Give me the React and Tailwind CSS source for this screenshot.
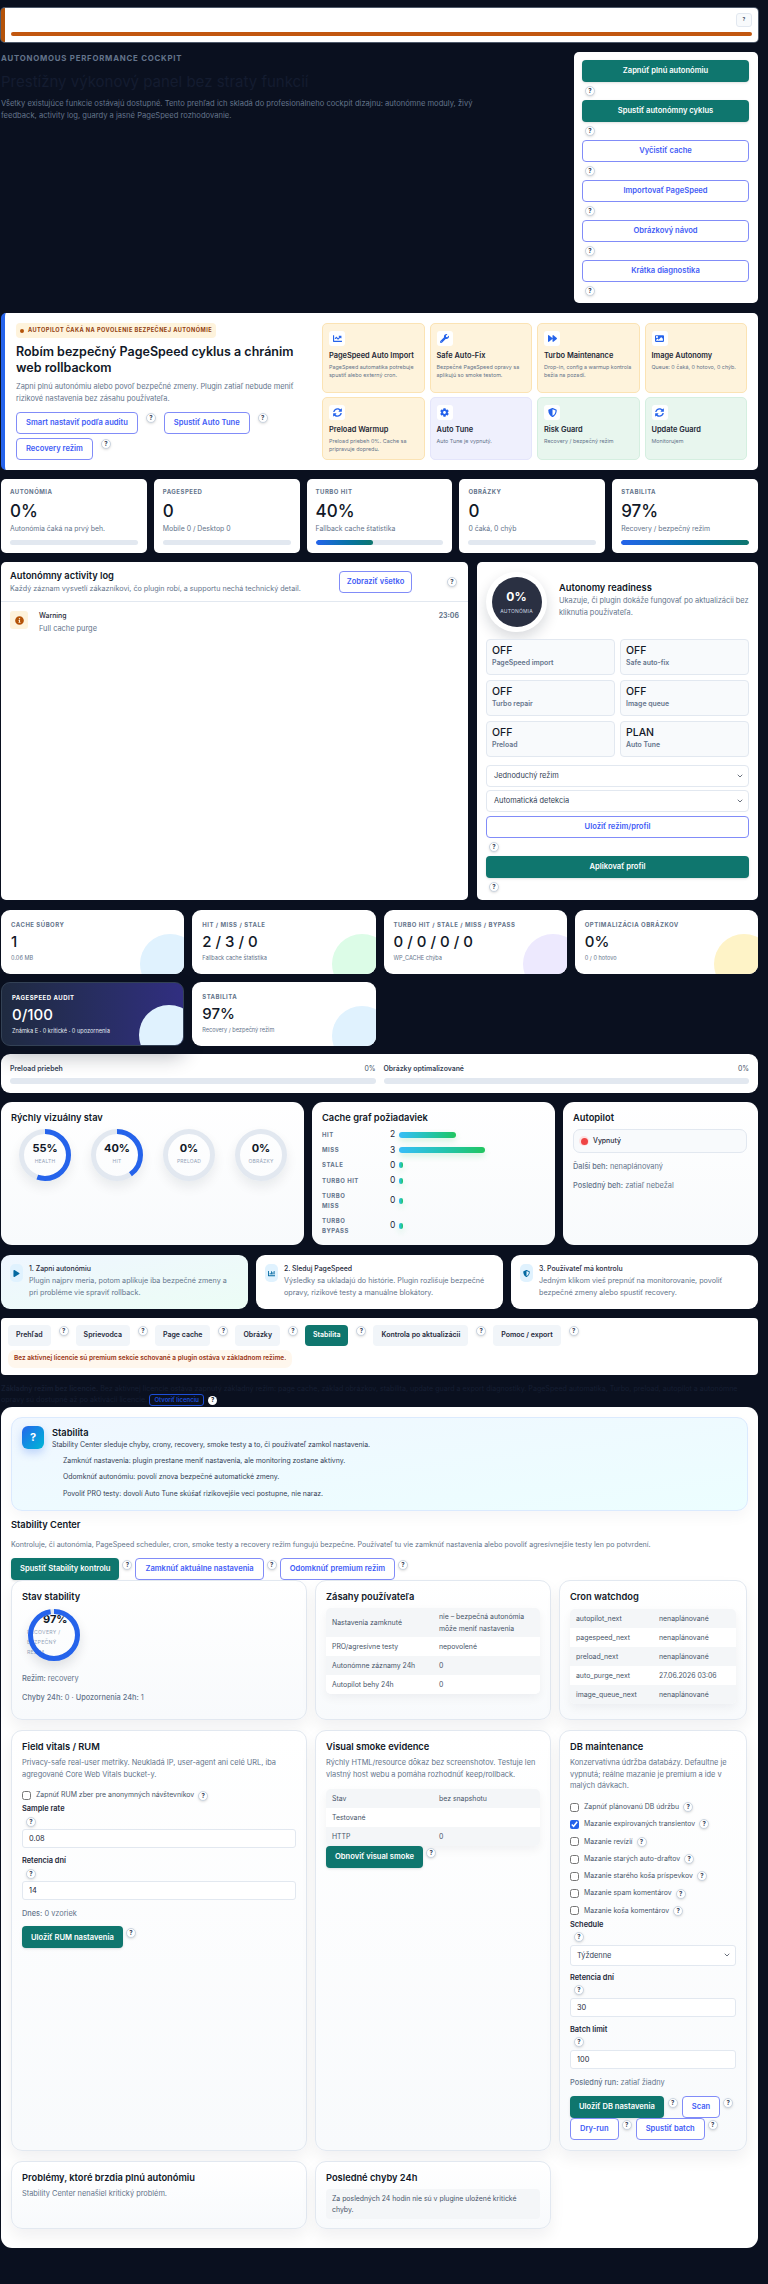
import {
    FaWrench, FaForward, FaCog, FaSyncAlt, FaShieldAlt, FaPlay, FaInfoCircle, FaChartBar, FaChartLine, FaImage,
} from 'react-icons/fa';
import { LuChevronDown } from 'react-icons/lu';

const Help = ({ className = '' }) => (
    <span className={`inline-flex h-[10px] w-[10px] shrink-0 items-center justify-center rounded-full border border-[#cbd5e1] bg-white text-[6px] font-bold leading-none text-[#334155] shadow-sm ${className}`}>
        ?
    </span>
);

const Btn = ({ children, primary, className = '' }) => (
    <button className={`flex h-[22px] shrink-0 items-center justify-center whitespace-nowrap rounded-[4px] px-[9px] text-[7.6px] font-semibold ${primary ? 'bg-[#0f766e] text-white shadow-sm' : 'border border-[#818cf8] bg-white text-[#3f5cf6]'} ${className}`}>
        {children}
    </button>
);

const sideActions = [
    ['Zapnúť plnú autonómiu', true],
    ['Spustiť autonómny cyklus', true],
    ['Vyčistiť cache', false],
    ['Importovať PageSpeed', false],
    ['Obrázkový návod', false],
    ['Krátka diagnostika', false],
];

const tiles = [
    { icon: FaChartLine, title: 'PageSpeed Auto Import', text: 'PageSpeed automatika potrebuje spustiť alebo externý cron.', color: 'amber' },
    { icon: FaWrench, title: 'Safe Auto-Fix', text: 'Bezpečné PageSpeed opravy sa aplikujú so smoke testom.', color: 'amber' },
    { icon: FaForward, title: 'Turbo Maintenance', text: 'Drop-in, config a warmup kontrola bežia na pozadí.', color: 'amber' },
    { icon: FaImage, title: 'Image Autonomy', text: 'Queue: 0 čaká, 0 hotovo, 0 chýb.', color: 'amber' },
    { icon: FaSyncAlt, title: 'Preload Warmup', text: 'Preload priebeh 0%. Cache sa pripravuje dopredu.', color: 'amber' },
    { icon: FaCog, title: 'Auto Tune', text: 'Auto Tune je vypnutý.', color: 'violet' },
    { icon: FaShieldAlt, title: 'Risk Guard', text: 'Recovery / bezpečný režim', color: 'green' },
    { icon: FaSyncAlt, title: 'Update Guard', text: 'Monitorujem', color: 'green' },
];

const tileColors = {
    amber: 'bg-[#fef3dc] border-[#fbe3b4]',
    violet: 'bg-[#eff0fd] border-[#e4e5fb]',
    green: 'bg-[#e8f6ee] border-[#d5efe0]',
};

const kpis = [
    ['AUTONÓMIA', '0%', 'Autonómia čaká na prvý beh.', 0],
    ['PAGESPEED', '0', 'Mobile 0 / Desktop 0', 0],
    ['TURBO HIT', '40%', 'Fallback cache štatistika', 45],
    ['OBRÁZKY', '0', '0 čaká, 0 chýb', 0],
    ['STABILITA', '97%', 'Recovery / bezpečný režim', 100],
];

const readiness = [
    ['OFF', 'PageSpeed import'],
    ['OFF', 'Safe auto-fix'],
    ['OFF', 'Turbo repair'],
    ['OFF', 'Image queue'],
    ['OFF', 'Preload'],
    ['PLAN', 'Auto Tune'],
];

const stats = [
    { label: 'CACHE SÚBORY', value: '1', sub: '0.06 MB', blob: 'bg-[#e0f2fe]' },
    { label: 'HIT / MISS / STALE', value: '2 / 3 / 0', sub: 'Fallback cache štatistika', blob: 'bg-[#dcfce7]' },
    { label: 'TURBO HIT / STALE / MISS / BYPASS', value: '0 / 0 / 0 / 0', sub: 'WP_CACHE chýba', blob: 'bg-[#ede9fe]' },
    { label: 'OPTIMALIZÁCIA OBRÁZKOV', value: '0%', sub: '0 / 0 hotovo', blob: 'bg-[#fef3c7]' },
    { label: 'PAGESPEED AUDIT', value: '0/100', sub: 'Známka E · 0 kritické · 0 upozornenia', blob: 'bg-[#e0f2fe]', dark: true },
    { label: 'STABILITA', value: '97%', sub: 'Recovery / bezpečný režim', blob: 'bg-[#e0f2fe]' },
];

const rings = [
    ['55%', 'HEALTH', 55],
    ['40%', 'HIT', 40],
    ['0%', 'PRELOAD', 0],
    ['0%', 'OBRÁZKY', 0],
];

const cacheRows = [
    { label: 'HIT', value: 2, bar: 'w-[57px]' },
    { label: 'MISS', value: 3, bar: 'w-[86px]' },
    { label: 'STALE', value: 0, bar: 'w-[4px]' },
    { label: 'TURBO HIT', value: 0, bar: 'w-[4px]' },
    { label: 'TURBO MISS', value: 0, bar: 'w-[4px]', tall: true },
    { label: 'TURBO BYPASS', value: 0, bar: 'w-[4px]', tall: true },
];

const steps = [
    { icon: FaPlay, title: '1. Zapni autonómiu', text: 'Plugin najprv meria, potom aplikuje iba bezpečné zmeny a pri probléme vie spraviť rollback.', tint: true },
    { icon: FaChartBar, title: '2. Sleduj PageSpeed', text: 'Výsledky sa ukladajú do histórie. Plugin rozlišuje bezpečné opravy, rizikové testy a manuálne blokátory.' },
    { icon: FaShieldAlt, title: '3. Používateľ má kontrolu', text: 'Jedným klikom vieš prepnúť na monitorovanie, povoliť bezpečné zmeny alebo spustiť recovery.' },
];

const tabs = ['Prehľad', 'Sprievodca', 'Page cache', 'Obrázky', 'Stabilita', 'Kontrola po aktualizácii', 'Pomoc / export'];

const dbChecks = [
    ['Zapnúť plánovanú DB údržbu', false],
    ['Mazanie expirovaných transientov', true],
    ['Mazanie revízií', false],
    ['Mazanie starých auto-draftov', false],
    ['Mazanie starého koša príspevkov', false],
    ['Mazanie spam komentárov', false],
    ['Mazanie koša komentárov', false],
];

const Ring = ({ pct }) => {
    const r = 23.5;
    const len = 2 * Math.PI * r;
    return (
        <svg width="52" height="52" viewBox="0 0 52 52" className="block">
            <circle cx="26" cy="26" r={r} fill="none" stroke="#e2e8f0" strokeWidth="5" />
            <circle
                cx="26"
                cy="26"
                r={r}
                fill="none"
                stroke="#2563eb"
                strokeWidth="5"
                strokeDasharray={`${(len * pct) / 100} ${len}`}
                transform="rotate(-90 26 26)"
            />
        </svg>
    );
};

const Panel = ({ title, children, className = '' }) => (
    <div className={`rounded-[11px] border border-[#e2e8f0] bg-gradient-to-b from-white to-[#f8fafc] px-[10px] pt-[9px] shadow-[0_8px_16px_rgba(15,23,42,0.06)] ${className}`}>
        <h3 className="text-[9.3px] font-semibold leading-[13px] text-[#111827]">{title}</h3>
        {children}
    </div>
);

const DataTable = ({ rows, firstCol, className = '' }) => (
    <div className={`overflow-hidden rounded-[5px] bg-white text-[6.9px] leading-[11.5px] text-[#475569] shadow-[0_4px_10px_rgba(15,23,42,0.05)] ${className}`}>
        {rows.map(([a, b], i) => (
            <div key={a} className={`flex min-h-[19px] items-center px-[6px] py-[3px] ${i % 2 === 0 ? 'bg-[#f4f6f8]' : 'bg-white'}`}>
                <span className={`shrink-0 ${firstCol}`}>{a}</span>
                <span>{b}</span>
            </div>
        ))}
    </div>
);

const Field = ({ label, value, children }) => (
    <div>
        <div className="text-[7.4px] font-semibold leading-[10px] text-[#1e293b]">{label}</div>
        <div className="flex h-[15px] items-center pl-[4px]"><Help /></div>
        {children || (
            <input
                readOnly
                value={value}
                className="block h-[19px] w-full rounded-[3px] border border-[#e2e8f0] bg-white px-[6px] text-[7.4px] text-[#1e293b]"
            />
        )}
    </div>
);

const Check = ({ label, checked = false }) => (
    <label className="flex h-[17.3px] items-center">
        <input type="checkbox" readOnly checked={checked} className="mr-[5px] h-[9px] w-[9px] accent-[#2563eb]" />
        <span className="text-[6.9px] text-[#475569]">{label}</span>
        <Help className="ml-[4px]" />
    </label>
);

const App = () => {
    return (
        <div className="min-h-[2284px] bg-[#0a101f] pb-[36px] pl-px pr-[10px] pt-[8px] font-['Inter',sans-serif] text-[#111827]">
            {/* Top notice */}
            <div className="h-[34px] rounded-[4px] border-l-[4px] border-[#b45309] bg-white pr-[6px] pt-[5px] shadow-[0_0_0_1px_rgba(148,163,184,0.5)]">
                <div className="flex justify-end">
                    <button className="flex h-[14px] w-[16px] items-center justify-center rounded-[3px] border border-[#e2e8f0] bg-[#f8fafc] text-[5px] font-bold text-[#334155]">?</button>
                </div>
                <div className="ml-[6px] mt-[5px] h-[4px] rounded-full bg-[#c2570f]" />
            </div>

            {/* Header */}
            <div className="mt-[10px] flex justify-between">
                <div className="w-[490px]">
                    <div className="mt-[1px] text-[7.8px] font-bold leading-[10px] tracking-[0.1em] text-[#64748b]">AUTONOMOUS PERFORMANCE COCKPIT</div>
                    <h1 className="mt-[9px] text-[15px] font-normal leading-[20px] text-[#141c30]">Prestížny výkonový panel bez straty funkcií</h1>
                    <p className="mt-[6px] text-[7.6px] leading-[12px] text-[#64748b]">
                        Všetky existujúce funkcie ostávajú dostupné. Tento prehľad ich skladá do profesionálneho cockpit dizajnu: autonómne moduly, živý feedback, activity log, guardy a jasné PageSpeed rozhodovanie.
                    </p>
                </div>
                <div className="h-[251px] w-[184px] rounded-[5px] bg-white pl-[8px] pr-[9px] pt-[8px]">
                    {sideActions.map(([label, primary]) => (
                        <div key={label}>
                            <Btn primary={primary} className="w-full">{label}</Btn>
                            <div className="flex h-[18px] items-center pl-[3px]">
                                <Help />
                            </div>
                        </div>
                    ))}
                </div>
            </div>

            {/* Hero */}
            <div className="mt-[10px] flex h-[157px] justify-between rounded-[5px] border-l-[4px] border-[#2563eb] bg-white pb-[10px] pl-[11px] pr-[11px] pt-[10px]">
                <div className="w-[298px]">
                    <div className="flex h-[15px] w-fit items-center gap-[4px] rounded-[4px] bg-[#fef3dc] px-[4px] text-[5.6px] font-bold tracking-[0.08em] text-[#92400e]">
                        <span className="h-[4px] w-[4px] rounded-full bg-[#b45309]" />
                        AUTOPILOT ČAKÁ NA POVOLENIE BEZPEČNEJ AUTONÓMIE
                    </div>
                    <h2 className="mt-[6px] text-[12.5px] font-semibold leading-[16px] text-[#111827]">Robím bezpečný PageSpeed cyklus a chránim web rollbackom</h2>
                    <p className="mt-[5px] text-[7.4px] leading-[12px] text-[#64748b]">
                        Zapni plnú autonómiu alebo povoľ bezpečné zmeny. Plugin zatiaľ nebude meniť rizikové nastavenia bez zásahu používateľa.
                    </p>
                    <div className="mt-[7px] flex flex-wrap items-start gap-y-[4px]">
                        <Btn>Smart nastaviť podľa auditu</Btn>
                        <Help className="ml-[8px] mr-[8px] mt-[1px]" />
                        <Btn>Spustiť Auto Tune</Btn>
                        <Help className="ml-[8px] mr-[40px] mt-[1px]" />
                        <Btn>Recovery režim</Btn>
                        <Help className="ml-[8px] mt-[1px]" />
                    </div>
                </div>
                <div className="grid w-[425px] grid-cols-4 grid-rows-[70px_63px] gap-x-[5px] gap-y-[4px]">
                    {tiles.map(({ icon: Icon, title, text, color }) => (
                        <div key={title} className={`rounded-[5px] border px-[6px] pt-[7px] ${tileColors[color]}`}>
                            <span className="flex h-[15px] w-[16px] items-center justify-center rounded-[3px] bg-white">
                                <Icon className="h-[9px] w-[9px] text-[#2563eb]" />
                            </span>
                            <div className="mt-[5px] text-[7.4px] font-semibold leading-[10px] text-[#1f2937]">{title}</div>
                            <div className="mt-[2px] text-[5.4px] leading-[8px] text-[#64748b]">{text}</div>
                        </div>
                    ))}
                </div>
            </div>

            {/* KPI row */}
            <div className="mt-[9px] grid grid-cols-5 gap-[7px]">
                {kpis.map(([label, value, sub, pct]) => (
                    <div key={label} className="h-[74px] rounded-[5px] bg-white px-[9px] pt-[9px]">
                        <div className="text-[6px] font-bold leading-[8px] tracking-[0.08em] text-[#64748b]">{label}</div>
                        <div className="mt-[5px] text-[17px] font-medium leading-[20px] text-[#111827]">{value}</div>
                        <div className="mt-[3px] text-[6.9px] leading-[10px] text-[#64748b]">{sub}</div>
                        <div className="mt-[6px] h-[5px] overflow-hidden rounded-full bg-[#e2e8f0]">
                            <div className="h-full rounded-full bg-gradient-to-r from-[#2563eb] to-[#0f766e]" style={{ width: `${pct}%` }} />
                        </div>
                    </div>
                ))}
            </div>

            {/* Activity + readiness */}
            <div className="mt-[9px] grid h-[338px] grid-cols-[467px_281px] gap-[9px]">
                <div className="rounded-[5px] bg-white">
                    <div className="flex h-[40px] items-center justify-between border-b border-[#e2e8f0] pl-[9px] pr-[11px]">
                        <div>
                            <h3 className="text-[9.3px] font-semibold leading-[13px] text-[#111827]">Autonómny activity log</h3>
                            <p className="text-[7.2px] leading-[13px] text-[#64748b]">Každý záznam vysvetlí zákazníkovi, čo plugin robí, a supportu nechá technický detail.</p>
                        </div>
                        <div className="flex items-center">
                            <Btn className="w-[73px] px-0">Zobraziť všetko</Btn>
                            <Help className="ml-[35px]" />
                        </div>
                    </div>
                    <div className="flex pl-[9px] pr-[9px] pt-[9px]">
                        <span className="flex h-[18px] w-[18px] items-center justify-center rounded-[3px] bg-[#fef3dc]">
                            <FaInfoCircle className="h-[9px] w-[9px] text-[#b45309]" />
                        </span>
                        <div className="ml-[11px] flex-1">
                            <div className="text-[6.9px] font-medium leading-[10px] text-[#1f2937]">Warning</div>
                            <div className="mt-[2px] text-[7.4px] leading-[12px] text-[#64748b]">Full cache purge</div>
                        </div>
                        <div className="text-[6.9px] font-bold leading-[10px] text-[#64748b]">23:06</div>
                    </div>
                </div>

                <div className="rounded-[5px] bg-white pl-[9px] pr-[9px] pt-[10px]">
                    <div className="flex items-center">
                        <div className="flex h-[60px] w-[61px] shrink-0 items-center justify-center rounded-full bg-white shadow-[0_6px_14px_rgba(15,23,42,0.16)]">
                            <div className="flex h-[50px] w-[50px] flex-col items-center justify-center rounded-full bg-[#2a3042] text-white">
                                <div className="text-[12px] font-bold leading-[16px]">0%</div>
                                <div className="mt-[3px] text-[5px] leading-[7px] tracking-[0.04em] text-[#cbd5e1]">AUTONÓMIA</div>
                            </div>
                        </div>
                        <div className="ml-[12px] mt-[-5px]">
                            <h3 className="text-[9.3px] font-semibold leading-[13px] text-[#111827]">Autonomy readiness</h3>
                            <p className="mt-[1px] text-[7.4px] leading-[12px] text-[#64748b]">Ukazuje, či plugin dokáže fungovať po aktualizácii bez kliknutia používateľa.</p>
                        </div>
                    </div>
                    <div className="mt-[7px] grid grid-cols-2 gap-x-[5px] gap-y-[5px]">
                        {readiness.map(([value, label]) => (
                            <div key={label} className="h-[36px] rounded-[4px] border border-[#e2e8f0] bg-[#f8fafc] px-[5px] pt-[4px]">
                                <div className="text-[10.5px] font-medium leading-[14px] text-[#111827]">{value}</div>
                                <div className="text-[6.9px] font-semibold leading-[10px] text-[#64748b]">{label}</div>
                            </div>
                        ))}
                    </div>
                    <div className="mt-[8px] flex h-[22px] items-center justify-between rounded-[4px] border border-[#e2e8f0] bg-white pl-[7px] pr-[4px] text-[7.4px] text-[#334155]">
                        Jednoduchý režim <LuChevronDown className="h-[8px] w-[8px] text-[#1e293b]" />
                    </div>
                    <div className="mt-[3px] flex h-[22px] items-center justify-between rounded-[4px] border border-[#e2e8f0] bg-white pl-[7px] pr-[4px] text-[7.4px] text-[#334155]">
                        Automatická detekcia <LuChevronDown className="h-[8px] w-[8px] text-[#1e293b]" />
                    </div>
                    <Btn className="mt-[4px] w-full">Uložiť režim/profil</Btn>
                    <div className="flex h-[18px] items-center pl-[3px]"><Help /></div>
                    <Btn primary className="w-full">Aplikovať profil</Btn>
                    <div className="flex h-[18px] items-center pl-[3px]"><Help /></div>
                </div>
            </div>

            {/* Stat cards */}
            <div className="mt-[10px] grid grid-cols-4 gap-x-[8px] gap-y-[8px]">
                {stats.map(({ label, value, sub, blob, dark }) => (
                    <div
                        key={label}
                        className={`relative h-[64px] overflow-hidden rounded-[9px] px-[10px] pt-[11px] ${dark ? 'border border-[#334155] bg-gradient-to-r from-[#1f2a40] to-[#312e81] text-white shadow-[0_10px_20px_rgba(15,23,42,0.3)]' : 'bg-white text-[#111827]'}`}
                    >
                        <div className={`absolute bottom-[-20px] right-[-16px] h-[60px] w-[60px] rounded-full ${blob}`} />
                        <div className={`relative text-[6px] font-bold leading-[8px] tracking-[0.08em] ${dark ? 'text-white' : 'text-[#64748b]'}`}>{label}</div>
                        <div className="relative mt-[4px] text-[15px] font-medium leading-[18px]">{value}</div>
                        <div className={`relative mt-[3px] text-[5.6px] leading-[8px] ${dark ? 'text-[#e2e8f0]' : 'text-[#64748b]'}`}>{sub}</div>
                    </div>
                ))}
            </div>

            {/* Progress */}
            <div className="mt-[8px] grid h-[39px] grid-cols-2 gap-x-[8px] rounded-[9px] bg-white px-[9px] pt-[10px]">
                {[['Preload priebeh', '0%'], ['Obrázky optimalizované', '0%']].map(([label, value]) => (
                    <div key={label}>
                        <div className="flex justify-between text-[6.9px] leading-[10px]">
                            <span className="font-semibold text-[#334155]">{label}</span>
                            <span className="text-[#475569]">{value}</span>
                        </div>
                        <div className="mt-[4px] h-[6px] rounded-full bg-[#e2e8f0]" />
                    </div>
                ))}
            </div>

            {/* Visual row */}
            <div className="mt-[9px] grid h-[143px] grid-cols-[303px_243px_195px] gap-[8px]">
                <div className="rounded-[11px] bg-gradient-to-b from-white to-[#f8fafc] px-[10px] pt-[9px]">
                    <h3 className="text-[9.3px] font-semibold leading-[13px]">Rýchly vizuálny stav</h3>
                    <div className="ml-[8px] mt-[5px] flex gap-[20px]">
                        {rings.map(([value, label, pct]) => (
                            <div key={label} className="relative h-[52px] w-[52px] rounded-full shadow-[0_6px_12px_rgba(15,23,42,0.08)]">
                                <Ring pct={pct} />
                                <div className="absolute inset-0 flex flex-col items-center justify-center">
                                    <div className="mt-[-5px] text-[11px] font-bold leading-[14px] text-[#111827]">{value}</div>
                                    <div className="mt-[3px] text-[5px] leading-[7px] tracking-[0.04em] text-[#94a3b8]">{label}</div>
                                </div>
                            </div>
                        ))}
                    </div>
                </div>

                <div className="rounded-[11px] bg-gradient-to-b from-white to-[#f8fafc] px-[10px] pt-[9px]">
                    <h3 className="text-[9.3px] font-semibold leading-[13px]">Cache graf požiadaviek</h3>
                    <div className="mt-[3px]">
                        {cacheRows.map(({ label, value, bar, tall }) => (
                            <div key={label} className={`flex items-center ${tall ? 'h-[25px]' : 'h-[15.3px]'}`}>
                                <span className="w-[68px]">
                                    <span className={`block text-[6px] font-bold leading-[10px] tracking-[0.08em] text-[#64748b] ${tall ? 'max-w-[34px]' : ''}`}>{label}</span>
                                </span>
                                <span className="w-[6px] text-[8.5px] leading-none text-[#1e293b]">{value}</span>
                                <span className={`ml-[3px] h-[6px] rounded-full bg-gradient-to-r from-[#38bdf8] to-[#22c55e] shadow-[0_3px_6px_rgba(34,197,94,0.2)] ${bar}`} />
                            </div>
                        ))}
                    </div>
                </div>

                <div className="rounded-[11px] bg-gradient-to-b from-white to-[#f8fafc] px-[10px] pt-[9px]">
                    <h3 className="text-[9.3px] font-semibold leading-[13px]">Autopilot</h3>
                    <div className="mt-[5px] flex h-[24px] w-[174px] items-center rounded-[7px] border border-[#e2e8f0] bg-[#f8fafc] pl-[5px] text-[6.9px] font-medium text-[#1e293b]">
                        <span className="mr-[4px] flex h-[10px] w-[10px] items-center justify-center rounded-full bg-[#fee2e2]">
                            <span className="h-[7px] w-[7px] rounded-full bg-[#ef4444]" />
                        </span>
                        Vypnutý
                    </div>
                    <p className="mt-[9px] text-[7.4px] leading-[10px] text-[#64748b]"><span className="font-medium">Ďalší beh:</span> nenaplánovaný</p>
                    <p className="mt-[9px] text-[7.4px] leading-[10px] text-[#64748b]"><span className="font-medium">Posledný beh:</span> zatiaľ nebežal</p>
                </div>
            </div>

            {/* Steps */}
            <div className="mt-[10px] grid grid-cols-3 gap-[8px]">
                {steps.map(({ icon: Icon, title, text, tint }) => (
                    <div key={title} className={`flex h-[54px] rounded-[9px] pl-[9px] pr-[12px] pt-[9px] ${tint ? 'bg-gradient-to-br from-[#eff6ff] to-[#ecfdf5]' : 'bg-white'}`}>
                        <span className="flex h-[18px] w-[13px] shrink-0 items-center justify-center rounded-[5px] bg-[#e0f2fe]">
                            <Icon className="h-[7px] w-[7px] text-[#0369a1]" />
                        </span>
                        <div className="ml-[6px]">
                            <div className="text-[6.9px] font-medium leading-[10px] text-[#1e293b]">{title}</div>
                            <p className="mt-[1px] text-[7.2px] leading-[12px] text-[#64748b]">{text}</p>
                        </div>
                    </div>
                ))}
            </div>

            {/* Tabs */}
            <div className="mt-[9px] h-[57px] rounded-[4px] bg-white px-[7px] pt-[7px]">
                <div className="flex items-start">
                    {tabs.map((tab) => (
                        <div key={tab} className="flex items-start">
                            <span className={`flex h-[21px] items-center rounded-[4px] px-[8px] text-[7px] font-semibold ${tab === 'Stabilita' ? 'bg-[#0f766e] text-white' : 'bg-[#f1f5f9] text-[#1e293b]'}`}>
                                {tab}
                            </span>
                            <Help className="ml-[8px] mr-[7px] mt-[1px]" />
                        </div>
                    ))}
                </div>
                <div className="mt-[4px] flex h-[18px] w-fit items-center rounded-[7px] bg-[#fff7ed] px-[6px] text-[6.5px] font-semibold text-[#9a3412]">
                    Bez aktívnej licencie sú premium sekcie schované a plugin ostáva v základnom režime.
                </div>
            </div>

            {/* Dark licence text */}
            <p className="mt-[9px] h-[23px] text-[7.1px] leading-[10px] text-[#161f33]">
                <span className="font-semibold">Základný režim bez licencie.</span> Bez aktívnej licencie ostáva zapnutý základný režim: page cache, základ obrázkov, stabilita, update guard a export diagnostiky. PageSpeed automatika, Turbo, preload, autopilot a autonómne opravy sú dostupné až po aktivácii licencie.{' '}
                <span className="inline-flex h-[12px] w-[55px] items-center justify-center rounded-[3px] border border-[#1d4ed8] align-middle text-[6px] font-semibold text-[#1d4ed8]">Otvoriť licenciu</span>
                <span className="ml-[4px] inline-flex h-[9px] w-[9px] items-center justify-center rounded-full bg-white align-middle text-[6px] font-bold text-[#111827]">?</span>
            </p>

            {/* Stability section */}
            <div className="h-[841px] rounded-[11px] bg-white px-[10px] pt-[10px]">
                <div className="flex h-[94px] rounded-[11px] border border-[#dbeafe] bg-gradient-to-br from-[#f0f7ff] to-[#ecfeff] pl-[10px] pt-[8px] shadow-[0_6px_14px_rgba(15,23,42,0.04)]">
                    <span className="flex h-[23px] w-[22px] shrink-0 items-center justify-center rounded-[6px] bg-gradient-to-br from-[#2563eb] to-[#06b6d4] text-[11px] font-bold text-white shadow-[0_4px_8px_rgba(37,99,235,0.25)]">?</span>
                    <div className="ml-[8px] text-[6.9px] text-[#334155]">
                        <h3 className="text-[9.3px] font-semibold leading-[13px] text-[#111827]">Stabilita</h3>
                        <p className="leading-[12px]">Stability Center sleduje chyby, crony, recovery, smoke testy a to, či používateľ zamkol nastavenia.</p>
                        <p className="ml-[11px] mt-[4px] leading-[12px]">Zamknúť nastavenia: plugin prestane meniť nastavenia, ale monitoring zostane aktívny.</p>
                        <p className="ml-[11px] mt-[4px] leading-[12px]">Odomknúť autonómiu: povolí znova bezpečné automatické zmeny.</p>
                        <p className="ml-[11px] mt-[5px] leading-[12px]">Povoliť PRO testy: dovolí Auto Tune skúšať rizikovejšie veci postupne, nie naraz.</p>
                    </div>
                </div>

                <h2 className="mt-[7px] text-[9.3px] font-semibold leading-[13px] text-[#111827]">Stability Center</h2>
                <p className="mt-[8px] text-[7.1px] leading-[12px] text-[#64748b]">Kontroluje, či autonómia, PageSpeed scheduler, cron, smoke testy a recovery režim fungujú bezpečne. Používateľ tu vie zamknúť nastavenia alebo povoliť agresívnejšie testy len po potvrdení.</p>
                <div className="mt-[7px] flex items-start">
                    <Btn primary>Spustiť Stability kontrolu</Btn>
                    <Help className="ml-[3px] mr-[3px] mt-[2px]" />
                    <Btn>Zamknúť aktuálne nastavenia</Btn>
                    <Help className="ml-[3px] mr-[3px] mt-[2px]" />
                    <Btn>Odomknúť premium režim</Btn>
                    <Help className="ml-[3px] mt-[2px]" />
                </div>

                <div className="grid grid-cols-[296px_236px_188px] grid-rows-[140px_421px_68px] gap-x-[8px] gap-y-[10px]">
                    <Panel title="Stav stability">
                        <div className="relative ml-[6px] mt-[6px] h-[52px] w-[52px] rounded-full shadow-[0_6px_12px_rgba(15,23,42,0.12)]">
                            <div className="absolute left-[-1px] top-[18px] w-[40px] text-[5.2px] leading-[10px] tracking-[0.05em] text-[#94a3b8]">RECOVERY / BEZPEČNÝ REŽIM</div>
                            <div className="absolute left-[15px] top-[3px] text-[11px] font-bold leading-[14px] text-[#111827]">97%</div>
                            <div className="absolute inset-0"><Ring pct={97} /></div>
                        </div>
                        <p className="mt-[13px] text-[7.4px] leading-[10px] text-[#64748b]"><span className="font-medium">Režim:</span> recovery</p>
                        <p className="mt-[9px] text-[7.4px] leading-[10px] text-[#64748b]"><span className="font-medium">Chyby 24h:</span> 0 · <span className="font-medium">Upozornenia 24h:</span> 1</p>
                    </Panel>
                    <Panel title="Zásahy používateľa">
                        <DataTable
                            firstCol="w-[107px]"
                            className="mt-[5px]"
                            rows={[
                                ['Nastavenia zamknuté', 'nie – bezpečná autonómia môže meniť nastavenia'],
                                ['PRO/agresívne testy', 'nepovolené'],
                                ['Autonómne záznamy 24h', '0'],
                                ['Autopilot behy 24h', '0'],
                            ]}
                        />
                    </Panel>
                    <Panel title="Cron watchdog">
                        <DataTable
                            firstCol="w-[83px]"
                            className="mt-[6px]"
                            rows={[
                                ['autopilot_next', 'nenaplánované'],
                                ['pagespeed_next', 'nenaplánované'],
                                ['preload_next', 'nenaplánované'],
                                ['auto_purge_next', '27.06.2026 03:06'],
                                ['image_queue_next', 'nenaplánované'],
                            ]}
                        />
                    </Panel>

                    <Panel title="Field vitals / RUM">
                        <p className="mt-[4px] text-[7.4px] leading-[11.5px] text-[#64748b]">Privacy-safe real-user metriky. Neukladá IP, user-agent ani celé URL, iba agregované Core Web Vitals bucket-y.</p>
                        <div className="mt-[7px]">
                            <Check label="Zapnúť RUM zber pre anonymných návštevníkov" />
                        </div>
                        <Field label="Sample rate" value="0.08" />
                        <div className="mt-[8px]"><Field label="Retencia dní" value="14" /></div>
                        <p className="mt-[9px] text-[7.4px] leading-[10px] text-[#64748b]"><span className="font-medium">Dnes:</span> 0 vzoriek</p>
                        <div className="mt-[7px] flex items-start">
                            <Btn primary>Uložiť RUM nastavenia</Btn>
                            <Help className="ml-[3px] mt-[2px]" />
                        </div>
                    </Panel>
                    <Panel title="Visual smoke evidence">
                        <p className="mt-[4px] text-[7.4px] leading-[11.5px] text-[#64748b]">Rýchly HTML/resource dôkaz bez screenshotov. Testuje len vlastný host webu a pomáha rozhodnúť keep/rollback.</p>
                        <DataTable
                            firstCol="w-[107px]"
                            className="mt-[9px]"
                            rows={[['Stav', 'bez snapshotu'], ['Testované', ''], ['HTTP', '0']]}
                        />
                        <div className="flex items-start">
                            <Btn primary>Obnoviť visual smoke</Btn>
                            <Help className="ml-[3px] mt-[2px]" />
                        </div>
                    </Panel>
                    <Panel title="DB maintenance">
                        <p className="mt-[4px] text-[7.4px] leading-[11.5px] text-[#64748b]">Konzervatívna údržba databázy. Defaultne je vypnutá; reálne mazanie je premium a ide v malých dávkach.</p>
                        <div className="mt-[7px]">
                            {dbChecks.map(([label, checked]) => (
                                <Check key={label} label={label} checked={checked} />
                            ))}
                        </div>
                        <Field label="Schedule">
                            <div className="flex h-[21px] items-center justify-between rounded-[3px] border border-[#e2e8f0] bg-white pl-[6px] pr-[4px] text-[7.4px] text-[#334155]">
                                Týždenne <LuChevronDown className="h-[8px] w-[8px] text-[#1e293b]" />
                            </div>
                        </Field>
                        <div className="mt-[7px]"><Field label="Retencia dní" value="30" /></div>
                        <div className="mt-[8px]"><Field label="Batch limit" value="100" /></div>
                        <p className="mt-[9px] text-[7.4px] leading-[10px] text-[#64748b]"><span className="font-medium">Posledný run:</span> zatiaľ žiadny</p>
                        <div className="mt-[8px] flex items-start">
                            <Btn primary>Uložiť DB nastavenia</Btn>
                            <Help className="ml-[4px] mr-[4px] mt-[2px]" />
                            <Btn>Scan</Btn>
                            <Help className="ml-[3px] mt-[2px]" />
                        </div>
                        <div className="flex items-start">
                            <Btn>Dry-run</Btn>
                            <Help className="ml-[3px] mr-[4px] mt-[2px]" />
                            <Btn>Spustiť batch</Btn>
                            <Help className="ml-[3px] mt-[2px]" />
                        </div>
                    </Panel>

                    <Panel title="Problémy, ktoré brzdia plnú autonómiu">
                        <p className="mt-[4px] text-[7.4px] leading-[12px] text-[#64748b]">Stability Center nenašiel kritický problém.</p>
                    </Panel>
                    <Panel title="Posledné chyby 24h">
                        <div className="mt-[5px] rounded-[4px] bg-[#f4f6f8] px-[6px] py-[4px] text-[6.9px] leading-[11px] text-[#475569]">
                            Za posledných 24 hodín nie sú v plugine uložené kritické chyby.
                        </div>
                    </Panel>
                </div>
            </div>
        </div>
    );
};

export default App;
